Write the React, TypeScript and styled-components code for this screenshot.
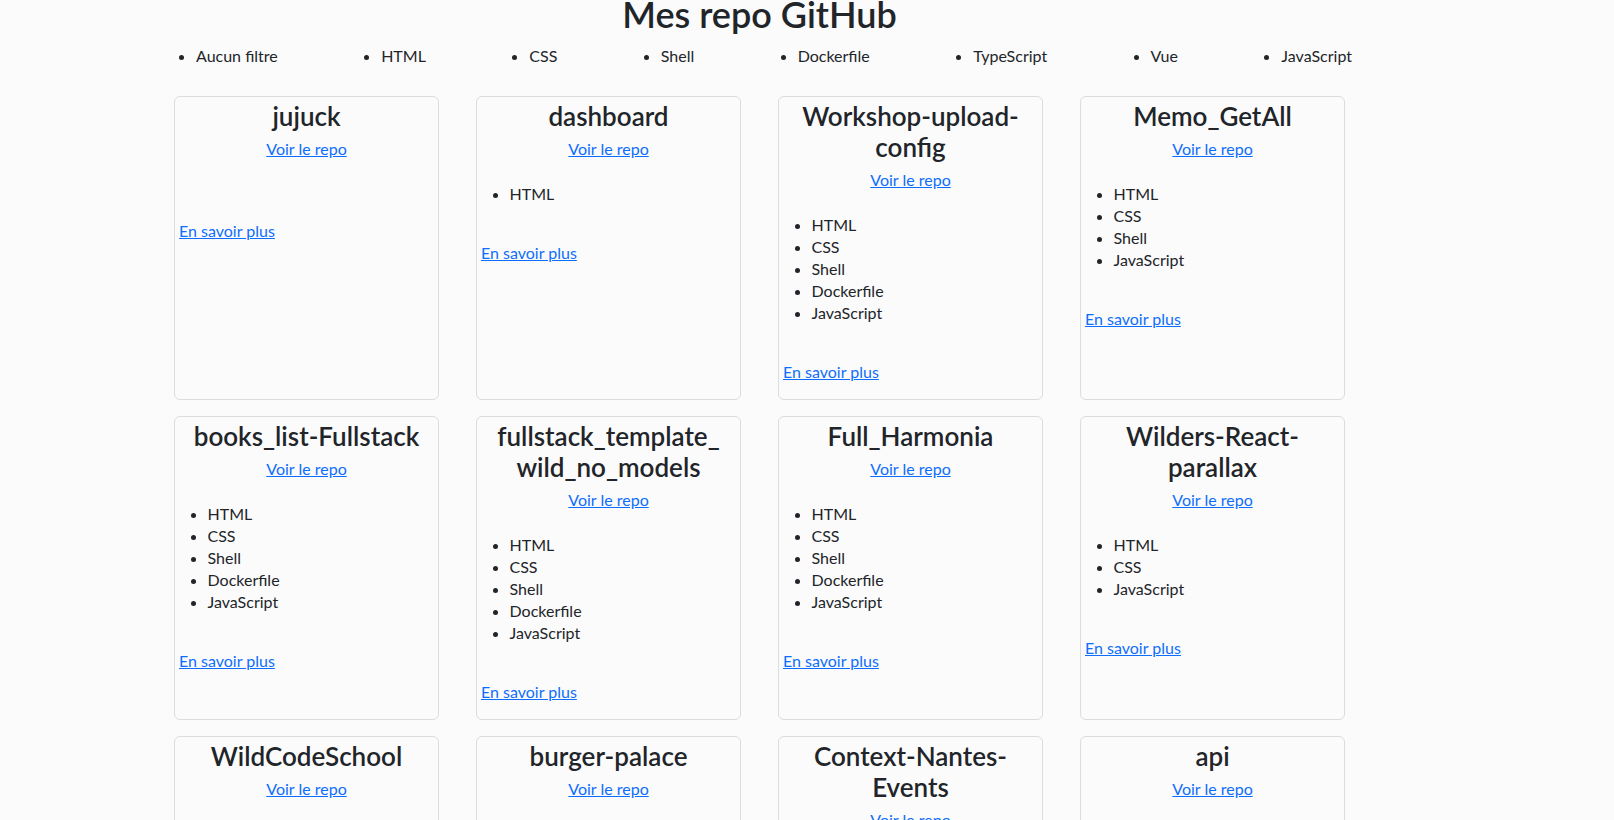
import React from "react";
import styled, { createGlobalStyle } from "styled-components";

const GlobalStyle = createGlobalStyle`
  html, body {
    margin: 0;
    padding: 0;
    overflow: hidden;
    background: #fcfbfc;
  }
  body {
    font-family: "Lato", "Liberation Sans", sans-serif;
    color: #212529;
    font-size: 16px;
  }
`;

const Page = styled.main`
  display: flex;
  flex-direction: column;
  width: 1171px;
  margin-left: 174px;
`;

const Title = styled.h1`
  margin: 0;
  font-size: 36px;
  line-height: 28px;
  font-weight: 600;
  text-align: center;
`;

const Filters = styled.ul`
  display: flex;
  justify-content: space-between;
  list-style: disc;
  margin: 17px 0 0 22px;
  padding: 0;
  width: 1156px;
  line-height: 22px;
`;

const FilterItem = styled.li`
  cursor: pointer;
`;

const Grid = styled.section`
  display: grid;
  grid-template-columns: repeat(4, 265px);
  column-gap: 37px;
  row-gap: 16px;
  margin-top: 29px;
`;

const Card = styled.article`
  box-sizing: border-box;
  height: 304px;
  border: 1px solid #dcdcdc;
  border-radius: 6px;
  padding: 4px;
  display: flex;
  flex-direction: column;
`;

const CardTitle = styled.h2`
  margin: 0;
  font-size: 26px;
  line-height: 31px;
  font-weight: 600;
  text-align: center;
  overflow-wrap: break-word;
`;

const Link = styled.a<{ $center?: boolean }>`
  display: block;
  align-self: ${(p) => (p.$center ? "center" : "flex-start")};
  line-height: 22px;
  color: #0d6efd;
  text-decoration: underline;
  cursor: pointer;
`;

const RepoLink = styled(Link)`
  margin-top: 5.5px;
`;

const Languages = styled.ul`
  margin: 23px 0 37.5px 0;
  padding-left: 28.5px;
  line-height: 22px;
`;

type Repo = { name: React.ReactNode; langs: string[] };

const repos: Repo[] = [
  { name: "jujuck", langs: [] },
  { name: "dashboard", langs: ["HTML"] },
  { name: "Workshop-upload-config", langs: ["HTML", "CSS", "Shell", "Dockerfile", "JavaScript"] },
  { name: "Memo_GetAll", langs: ["HTML", "CSS", "Shell", "JavaScript"] },
  { name: "books_list-Fullstack", langs: ["HTML", "CSS", "Shell", "Dockerfile", "JavaScript"] },
  {
    name: (
      <>
        fullstack_template_
        <wbr />
        wild_no_models
      </>
    ),
    langs: ["HTML", "CSS", "Shell", "Dockerfile", "JavaScript"],
  },
  { name: "Full_Harmonia", langs: ["HTML", "CSS", "Shell", "Dockerfile", "JavaScript"] },
  { name: "Wilders-React-parallax", langs: ["HTML", "CSS", "JavaScript"] },
  { name: "WildCodeSchool", langs: ["HTML", "CSS", "JavaScript"] },
  { name: "burger-palace", langs: ["HTML", "CSS", "JavaScript"] },
  { name: "Context-Nantes-Events", langs: ["HTML", "CSS", "JavaScript"] },
  { name: "api", langs: ["JavaScript"] },
];

const filters = ["Aucun filtre", "HTML", "CSS", "Shell", "Dockerfile", "TypeScript", "Vue", "JavaScript"];

export default function App() {
  return (
    <>
      <GlobalStyle />
      <Page>
        <Title>Mes repo GitHub</Title>
        <Filters>
          {filters.map((f) => (
            <FilterItem key={f}>{f}</FilterItem>
          ))}
        </Filters>
        <Grid>
          {repos.map((r, i) => (
            <Card key={i}>
              <CardTitle>{r.name}</CardTitle>
              <RepoLink $center href="#">Voir le repo</RepoLink>
              <Languages>
                {r.langs.map((l) => (
                  <li key={l}>{l}</li>
                ))}
              </Languages>
              <Link href="#">En savoir plus</Link>
            </Card>
          ))}
        </Grid>
      </Page>
    </>
  );
}
